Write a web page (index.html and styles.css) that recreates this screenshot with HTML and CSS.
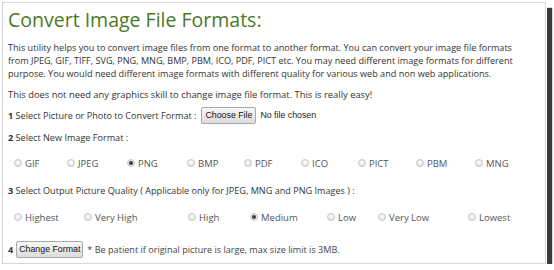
FILE: index.html
```html
<!DOCTYPE html>
<html lang="en">
<head>
  <meta charset="UTF-8">
  <title>Convert Image File Formats</title>
  <link rel="stylesheet" href="styles.css">
</head>
<body>
  <div class="frame">
    <h1 class="title">Convert Image File Formats:</h1>
    <p class="intro">This utility helps you to convert image files from one format to another format. You can convert your image file formats from JPEG, GIF, TIFF, SVG, PNG, MNG, BMP, PBM, ICO, PDF, PICT etc. You may need different image formats for different purpose. You would need different image formats with different quality for various web and non web applications.</p>
    <p class="intro second">This does not need any graphics skill to change image file format. This is really easy!</p>

    <div class="step step-file">
      <span><b>1</b> Select Picture or Photo to Convert Format :</span>
      <span class="btn file-btn">Choose File</span>
      <span class="file-name">No file chosen</span>
    </div>

    <div class="step"><b>2</b> Select New Image Format :</div>
    <div class="radios formats">
      <span class="opt f1"><i class="radio"></i>GIF</span>
      <span class="opt f2"><i class="radio"></i>JPEG</span>
      <span class="opt f3"><i class="radio checked"></i>PNG</span>
      <span class="opt f4"><i class="radio"></i>BMP</span>
      <span class="opt f5"><i class="radio"></i>PDF</span>
      <span class="opt f6"><i class="radio"></i>ICO</span>
      <span class="opt f7"><i class="radio"></i>PICT</span>
      <span class="opt f8"><i class="radio"></i>PBM</span>
      <span class="opt"><i class="radio"></i>MNG</span>
    </div>

    <div class="step step-quality"><b>3</b> Select Output Picture Quality ( Applicable only for JPEG, MNG and PNG Images ) :</div>
    <div class="radios quality">
      <span class="opt q1"><i class="radio"></i>Highest</span>
      <span class="opt q2"><i class="radio"></i>Very High</span>
      <span class="opt q3"><i class="radio"></i>High</span>
      <span class="opt q4"><i class="radio checked"></i>Medium</span>
      <span class="opt q5"><i class="radio"></i>Low</span>
      <span class="opt q6"><i class="radio"></i>Very Low</span>
      <span class="opt"><i class="radio"></i>Lowest</span>
    </div>

    <div class="step step-submit">
      <b>4</b>
      <span class="btn submit-btn">Change Format</span>
      <span class="note">* Be patient if original picture is large, max size limit is 3MB.</span>
    </div>
  </div>
</body>
</html>
```

FILE: styles.css
```css
/* Page */
body {
  margin: 0;
  background: #ffffff;
  font-family: 'Open Sans', 'DejaVu Sans', sans-serif;
  color: #333;
}

/* Outer frame with dark drop shadow */
.frame {
  margin: 2px 0 0 2px;
  width: 538px;
  height: 254px;
  padding: 0 0 6px 4px;
  border: 1px solid #d6d6d6;
  box-shadow: 1px 1px 0 #fff, 6px 6px 1px #3a3a3a;
  background: #fff;
  overflow: hidden;
}

.title {
  margin: 5px 0 0 1px;
  font-size: 19.5px;
  font-weight: normal;
  color: #4b7a26;
  line-height: 24px;
}

.intro {
  max-width: 518px;
  margin: 8.5px 0 0 1px;
  font-size: 9.1px;
  line-height: 13px;
}

.intro.second {
  margin-top: 8px;
  font-size: 9.4px;
}

/* Numbered steps */
.step {
  margin: 6.5px 0 0 1px;
  font-size: 9.1px;
  line-height: 13px;
}

.step b {
  font-weight: bold;
}

.step-file {
  display: flex;
  align-items: center;
  height: 17px;
}

.btn {
  display: inline-block;
  font-family: 'Liberation Sans', Arial, sans-serif;
  font-size: 8.8px;
  color: #111;
  border: 1px solid #a8a8a8;
  border-radius: 2px;
  background: linear-gradient(#f7f7f7, #dcdcdc);
  line-height: 15px;
}

.file-btn {
  margin-left: 5px;
  padding: 0 3px;
}

.file-name {
  margin-left: 4px;
  font-family: 'Liberation Sans', Arial, sans-serif;
  font-size: 8.8px;
  color: #222;
}

/* Radio rows */
.radios {
  display: flex;
  margin: 13px 0 0 7px;
  font-size: 9.5px;
  line-height: 13px;
  color: #555;
}

.opt {
  display: flex;
  align-items: center;
}

.radio {
  display: inline-block;
  width: 6px;
  height: 6px;
  margin-right: 3px;
  border-radius: 50%;
  border: 1px solid #c8c8c8;
  background: radial-gradient(circle at 50% 40%, #ffffff 0, #e8e8e8 60%, #d2d2d2 100%);
}

.radio.checked {
  background: radial-gradient(circle, #3a3a3a 0, #4a4a4a 1.5px, #e6e6e6 2.5px, #d0d0d0 100%);
}

.f1 { width: 53px; }
.f2 { width: 60px; }
.f3 { width: 60px; }
.f4 { width: 57px; }
.f5 { width: 57px; }
.f6 { width: 57px; }
.f7 { width: 58px; }
.f8 { width: 59px; }

.step-quality {
  margin-top: 14px;
}

.quality {
  margin-top: 14px;
}

.q1 { width: 70px; }
.q2 { width: 104px; }
.q3 { width: 62px; }
.q4 { width: 77px; }
.q5 { width: 51px; }
.q6 { width: 90px; }

.step-submit {
  margin-top: 17px;
  display: flex;
  align-items: center;
  height: 17px;
}

.submit-btn {
  margin-left: 3px;
  padding: 0 2px;
}

.note {
  margin-left: 4px;
  color: #444;
}
```
